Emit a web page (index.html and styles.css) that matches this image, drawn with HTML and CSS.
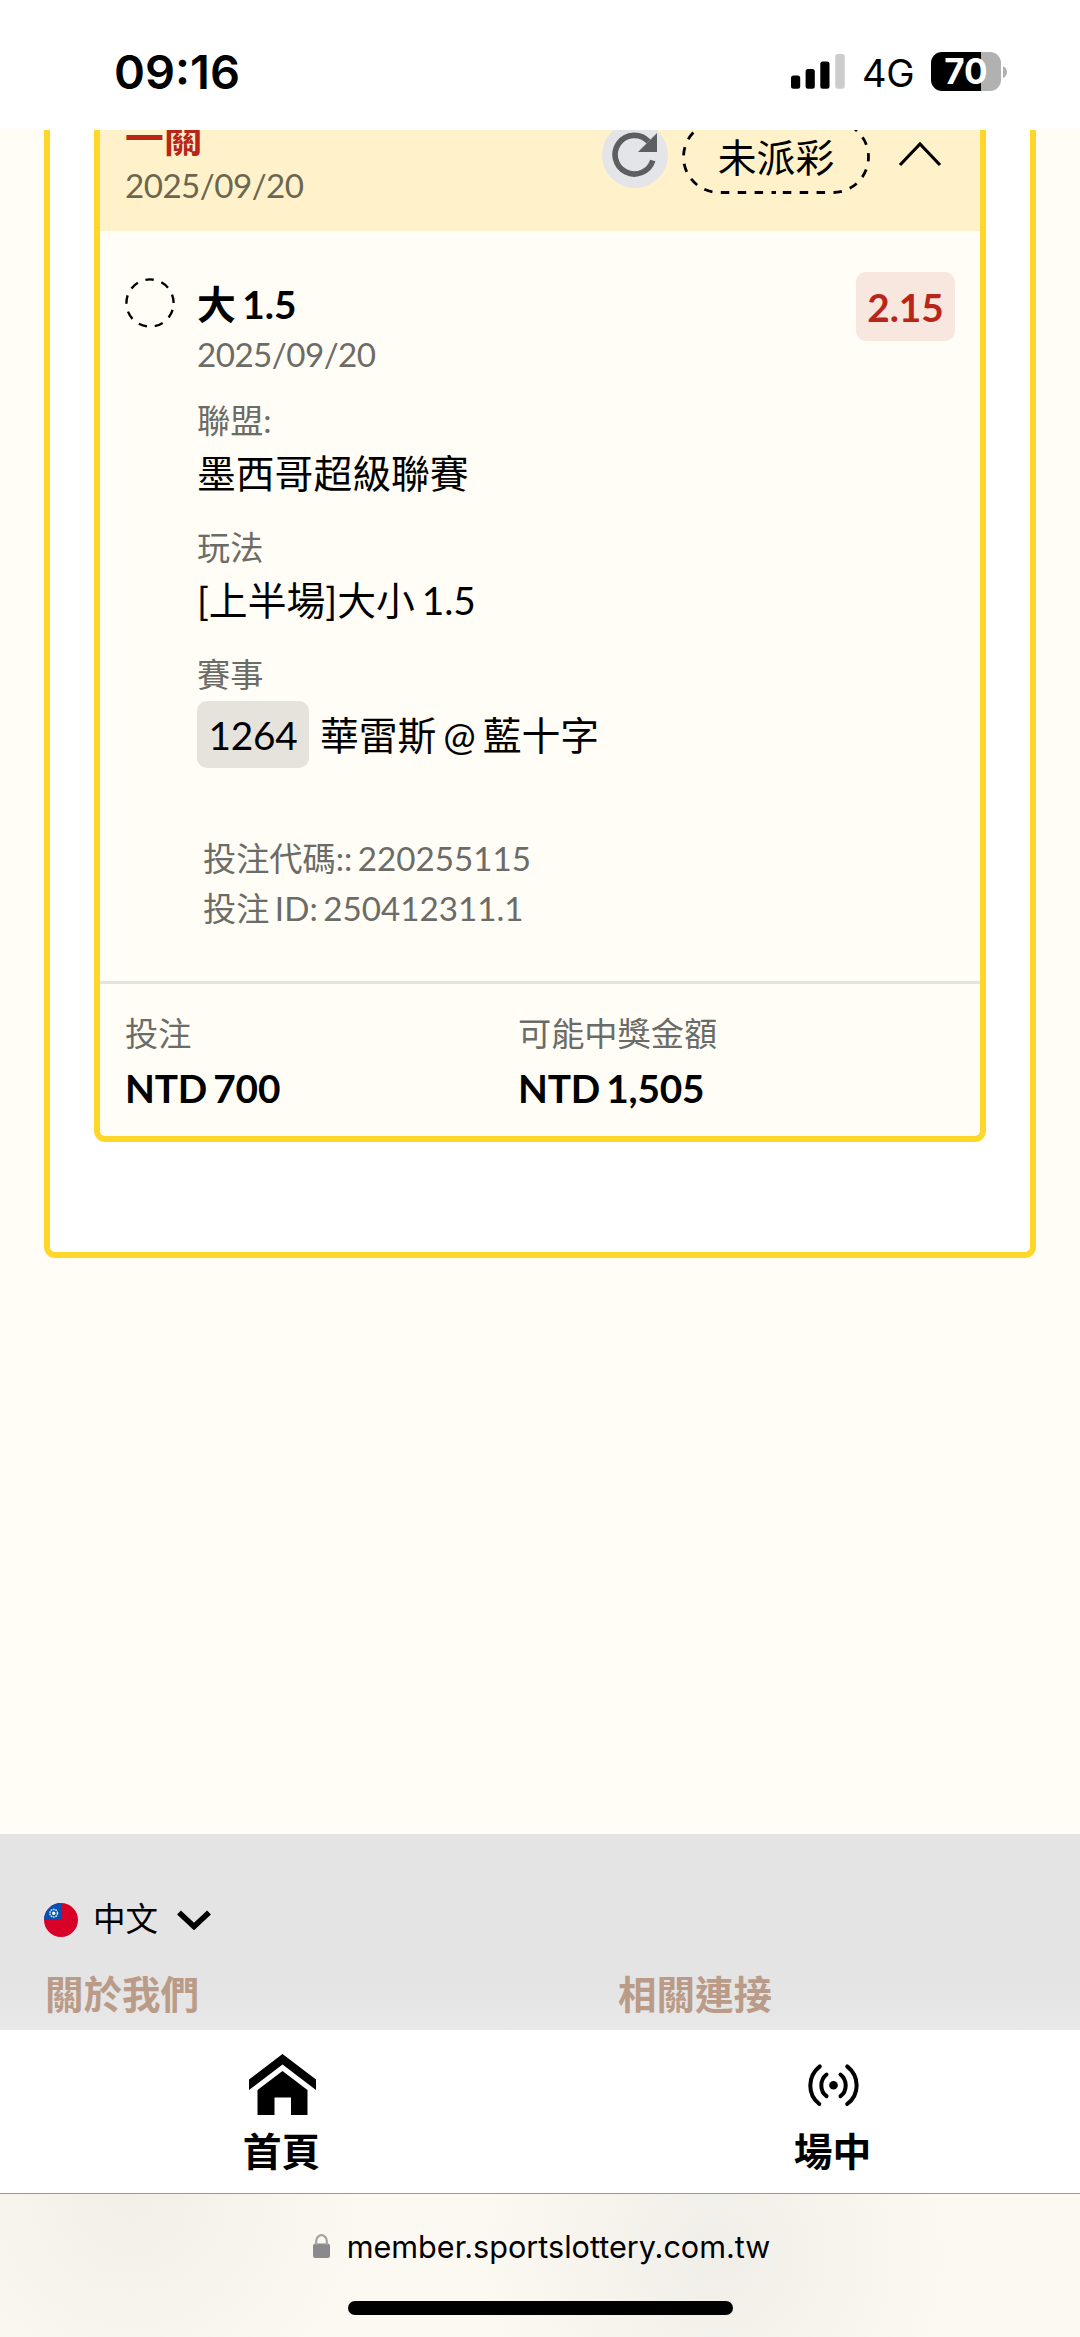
FILE: index.html
```
<!DOCTYPE html>
<html lang="zh-Hant">
<head>
  <meta charset="UTF-8">
  <meta name="viewport" content="width=device-width, initial-scale=1.0">
  <title>投注紀錄</title>
  <link rel="stylesheet" href="styles.css">
</head>
<body>

<div class="status-bar">
  <span class="clock">09:16</span>
  <div class="status-icons">
    <svg class="signal" width="38" height="35" viewBox="0 0 38 35">
      <rect x="0" y="21.5" width="9.2" height="13.2" rx="2.5"/>
      <rect x="14.6" y="15" width="9.2" height="19.7" rx="2.5"/>
      <rect x="29.3" y="7.6" width="9.2" height="27.1" rx="2.5"/>
      <rect x="44.3" y="0" width="9.4" height="34.7" rx="2.5" fill="#ccc"/>
    </svg>
    <span class="network">4G</span>
    <div class="battery"><span>70</span></div>
    <svg class="battery-tip" width="4" height="12" viewBox="0 0 4 12"><path d="M0 0Q4 2 4 6T0 12Z" fill="#b1b1b1"/></svg>
  </div>
</div>

<main class="content">
  <section class="bet-list">
    <article class="bet">
      <header class="bet-header">
        <div class="bet-title">
          <h2>一關</h2>
          <p class="date">2025/09/20</p>
        </div>
        <button class="refresh">
          <svg width="46" height="46" viewBox="0 0 46 46">
            <path d="M40.8 28.5A19.3 19.3 0 1 1 36.5 9.5" fill="none" stroke="#5d5e60" stroke-width="5.6"/>
            <path d="M45 1V20H26Z" fill="#5d5e60"/>
          </svg>
        </button>
        <div class="status-pill">
          <svg width="188" height="74" viewBox="0 0 188 74">
            <path d="M94 72.5H37A35.5 35.5 0 0 1 37 1.5H151A35.5 35.5 0 0 1 151 72.5H94" fill="none" stroke="#000" stroke-width="2.8" stroke-dasharray="8.5 8.4" stroke-dashoffset="4"/>
          </svg>
          <span>未派彩</span>
        </div>
        <svg class="chevron" width="44" height="26" viewBox="0 0 44 26"><path d="M2 24L22 3L42 24" fill="none" stroke="#000" stroke-width="3.2"/></svg>
      </header>

      <div class="bet-body">
        <svg class="pending" width="50" height="50" viewBox="0 0 50 50">
          <circle cx="25" cy="25" r="23.6" fill="none" stroke="#000" stroke-width="2.4" stroke-dasharray="8.5 7.97" stroke-dashoffset="-7"/>
        </svg>
        <div class="bet-info">
          <h3>大 1.5</h3>
          <p class="date">2025/09/20</p>
          <dl class="facts">
            <dt>聯盟:</dt>
            <dd>墨西哥超級聯賽</dd>
            <dt>玩法</dt>
            <dd>[上半場]大小 1.5</dd>
            <dt>賽事</dt>
            <dd class="match"><span class="match-no">1264</span>華雷斯 @ 藍十字</dd>
          </dl>
          <div class="codes">
            <p>投注代碼:: 220255115</p>
            <p>投注 ID: 250412311.1</p>
          </div>
        </div>
        <span class="odds">2.15</span>
      </div>

      <footer class="bet-total">
        <div>
          <p class="label">投注</p>
          <p class="amount">NTD 700</p>
        </div>
        <div>
          <p class="label">可能中獎金額</p>
          <p class="amount">NTD 1,505</p>
        </div>
      </footer>
    </article>
  </section>

  <footer class="site-footer">
    <div class="language">
      <svg class="flag" width="34" height="34" viewBox="0 0 34 34">
        <circle cx="17" cy="17" r="17" fill="#d80027"/>
        <path d="M17 0V17H0A17 17 0 0 1 17 0Z" fill="#0052b4"/>
        <circle cx="9.7" cy="10.2" r="3.8" fill="none" stroke="#e6eef8" stroke-width="1.5" stroke-dasharray="1.6 .8"/>
        <circle cx="9.7" cy="10.2" r="1.7" fill="#fff"/>
      </svg>
      <span>中文</span>
      <svg class="arrow" width="34" height="20" viewBox="0 0 34 20"><path d="M2 2.5L17 16.5L32 2.5" fill="none" stroke="#000" stroke-width="5.6"/></svg>
    </div>
    <div class="footer-links">
      <h4>關於我們</h4>
      <h4>相關連接</h4>
    </div>
  </footer>
</main>

<nav class="tab-bar">
  <a class="tab">
    <svg width="67" height="61" viewBox="0 0 67 61">
      <path d="M33.5 0L67 25.5V36L33.5 10.5L0 36V25.5Z"/>
      <path d="M33.5 17L58.5 36V61H42V43.5H25.5V61H8.5V36Z"/>
    </svg>
    <span>首頁</span>
  </a>
  <a class="tab">
    <svg width="51" height="61" viewBox="0 0 51 61">
      <g fill="none" stroke="#000" stroke-width="4" stroke-linecap="round">
        <path d="M11.8 12.4C-.8 22.5 -.8 40.5 11.3 50"/>
        <path d="M39.2 12.4C51.8 22.5 51.8 40.5 39.2 50"/>
        <path d="M18.5 20.5C11.6 26 11.6 37 18.5 42.2"/>
        <path d="M32.5 20.5C39.4 26 39.4 37 32.5 42.2"/>
      </g>
      <circle cx="25.5" cy="31.3" r="4.3"/>
    </svg>
    <span>場中</span>
  </a>
</nav>

<div class="address-bar">
  <div class="address">
    <svg width="17" height="24" viewBox="0 0 17 24">
      <rect x="0" y="9.5" width="17" height="14.5" rx="2.5" fill="#8a8a8d"/>
      <path d="M3.2 11V7A5.3 5.8 0 0 1 13.8 7V11" fill="none" stroke="#a3a3a4" stroke-width="2.2"/>
    </svg>
    <span>member.sportslottery.com.tw</span>
  </div>
  <div class="home-indicator"></div>
</div>

</body>
</html>
```

FILE: styles.css
```
/* Basic styling */
* { box-sizing: border-box; margin: 0; padding: 0; }
body { width: 1080px; height: 2337px; overflow: hidden; display: flex; flex-direction: column; background-color: #fff; color: #000; font-family: Lato, "Noto Sans CJK TC", sans-serif; font-size: 38.8px; word-spacing: -3px; }
svg { display: block; flex: none; }
button { border: none; }

/* Status bar */
.status-bar { height: 130px; flex: none; display: flex; justify-content: space-between; padding: 0 73px 0 114px; font-family: Inter, sans-serif; background-color: #fff; }
.clock { font-size: 47px; font-weight: 600; line-height: 56px; margin-top: 44px; }
.status-icons { display: flex; align-items: center; height: 39px; margin-top: 52px; }
.signal { overflow: visible; margin-right: 33px; }
.network { font-size: 38px; line-height: 38px; letter-spacing: -0.5px; margin: 2px 17px 0 0; }
.battery { width: 70px; height: 39px; border-radius: 11px; color: #fff; font-size: 35px; font-weight: 700; line-height: 39px; text-align: center; background: linear-gradient(90deg, #000 50px, #b1b1b1 50px); }
.battery-tip { margin-left: 2px; }

/* Bet card */
.content { flex: 1; min-height: 0; overflow: hidden; display: flex; flex-direction: column; background-color: #fffdf5; }
.bet-list { margin: -70px 44px 0; padding: 24px 44px 110px; border: 6px solid #ffd72b; border-radius: 11px; background-color: #fff; }
.bet { border: 6px solid #ffd72b; border-radius: 11px; background-color: #fffdf5; overflow: hidden; }
.bet-header { height: 135px; padding: 17px 38px 22px 25px; display: flex; align-items: flex-start; background-color: #fff2cb; }
.bet-title { flex: 1; }
h2 { font-size: 38.8px; line-height: 48px; color: #b92619; }
.date { font-size: 33.2px; line-height: 50px; letter-spacing: -0.55px; color: #6b6b67; }
.bet-header .date { line-height: 48px; color: #6b6650; }
.refresh { width: 66px; height: 66px; margin: 9px 14px 0 0; border-radius: 50%; display: flex; align-items: center; justify-content: center; background-color: #e3e5e8; }
.status-pill { position: relative; width: 188px; height: 74px; margin: 7px 28px 0 0; line-height: 74px; text-align: center; }
.status-pill svg { position: absolute; left: 0; top: 0; }
.chevron { margin-top: 28px; }

.bet-body { display: flex; align-items: flex-start; height: 750px; padding: 41px 25px 0; }
.pending { margin-top: 6px; }
.bet-info { flex: 1; margin-left: 22px; padding-top: 8px; }
h3 { font-size: 38.8px; line-height: 49px; }
.facts { margin-top: 16px; }
.facts dt { font-size: 33.2px; line-height: 50px; color: #6b6b67; }
.facts dd { line-height: 56px; margin-bottom: 21px; white-space: nowrap; }
.facts .match { display: flex; align-items: center; height: 67px; margin: 2px 0 0; }
.match-no { height: 67px; width: 112px; margin-right: 11px; text-align: center; letter-spacing: -0.3px; border-radius: 10px; line-height: 69px; background-color: #e6e3dd; }
.codes { margin-top: 65px; padding-left: 6px; font-size: 33.2px; line-height: 50px; color: #6b6b67; }
.odds { height: 69px; width: 99px; border-radius: 10px; line-height: 71px; text-align: center; font-weight: 700; color: #b92619; background-color: #f8e7df; }

.bet-total { display: grid; grid-template-columns: 393px 1fr; padding: 24px 25px 18px; border-top: 3px solid #e6e3dd; }
.label { font-size: 33.2px; line-height: 50px; color: #6b6b67; }
.amount { font-weight: 700; line-height: 60px; letter-spacing: -0.2px; }

/* Footer */
.site-footer { margin-top: auto; height: 196px; padding: 60px 44px 0; background: linear-gradient(#e4e4e4 75%, #e8e8e8); flex: none; }
.language { display: flex; align-items: center; height: 52px; font-size: 32.5px; line-height: 50px; }
.language span { margin: -2px 19px 0 15px; }
.footer-links { display: grid; grid-template-columns: 573px 1fr; margin-top: 23px; }
h4 { font-size: 38.5px; line-height: 50px; color: #b99b88; padding-left: 1px; }

/* Bottom navigation */
.tab-bar { height: 163px; flex: none; display: flex; padding-left: 7px; background-color: #fff; overflow: hidden; }
.tab { width: 551px; flex: none; padding-top: 24px; display: flex; flex-direction: column; align-items: center; font-weight: 700; line-height: 50px; }
.tab span { margin: 11px 2px 0 0; }

.address-bar { height: 144px; flex: none; display: flex; flex-direction: column; align-items: center; border-top: 1px solid #98989a; font-family: Inter, sans-serif; background: radial-gradient(circle at 130px 0, #f2efe9, rgba(242, 239, 233, 0) 240px), radial-gradient(circle at 715px 60px, #f0eee8, rgba(240, 238, 232, 0) 240px), #fbf9f1; }
.address { display: flex; align-items: center; height: 50px; margin: 27px 0 0 3px; font-size: 30.6px; }
.address span { margin-left: 17px; }
.home-indicator { width: 385px; height: 14px; margin-top: 30px; border-radius: 7px; background-color: #000; }
```
